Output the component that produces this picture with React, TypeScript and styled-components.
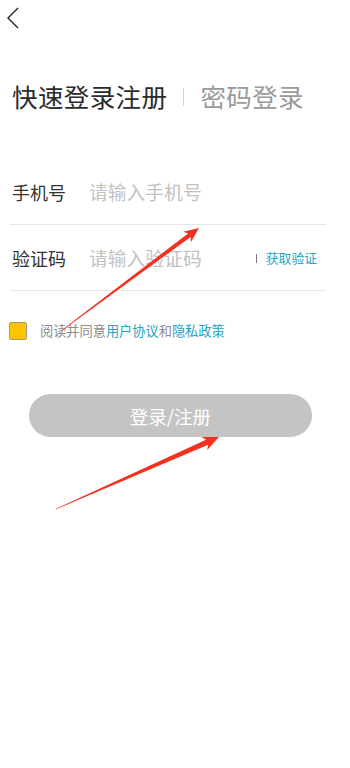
import React from 'react';
import styled, {createGlobalStyle} from 'styled-components';

const GlobalStyle = createGlobalStyle`
  html, body {
    margin: 0;
    padding: 0;
    background: #fff;
  }
  body {
    font-family: "Noto Sans CJK SC", "Noto Sans", sans-serif;
    color: #333;
  }
`;

type Pt = [number, number];

// tapered arrow polygon: thin tail, wider shaft at the head
const arrowPoints = (tail: Pt, tip: Pt, headLen = 16, headHalf = 7, shaftHalf = 2.4) => {
  const dx = tip[0] - tail[0];
  const dy = tip[1] - tail[1];
  const len = Math.hypot(dx, dy);
  const ux = dx / len;
  const uy = dy / len;
  const nx = -uy;
  const ny = ux;
  const bx = tip[0] - ux * headLen;
  const by = tip[1] - uy * headLen;
  const pts: Pt[] = [
    [tail[0] + nx * 0.3, tail[1] + ny * 0.3],
    [bx + ux * 3 + nx * shaftHalf, by + uy * 3 + ny * shaftHalf],
    [bx + nx * headHalf, by + ny * headHalf],
    tip,
    [bx - nx * headHalf, by - ny * headHalf],
    [bx + ux * 3 - nx * shaftHalf, by + uy * 3 - ny * shaftHalf],
    [tail[0] - nx * 0.3, tail[1] - ny * 0.3],
  ];
  return pts.map(p => `${p[0].toFixed(1)},${p[1].toFixed(1)}`).join(' ');
};

export default function App() {
  return (
    <Styled.Page>
      <GlobalStyle />
      <Styled.Header>
        <Styled.Back aria-label="back">
          <svg width="14" height="22" viewBox="0 0 14 22">
            <path d="M12 1 L2 11 L12 21" fill="none" stroke="#222" strokeWidth="1.4" />
          </svg>
        </Styled.Back>
      </Styled.Header>

      <Styled.TitleRow>
        <Styled.Tab>快速登录注册</Styled.Tab>
        <Styled.TabDivider />
        <Styled.Tab $muted>密码登录</Styled.Tab>
      </Styled.TitleRow>

      <Styled.Form>
        <Styled.Field>
          <Styled.Label>手机号</Styled.Label>
          <Styled.Input placeholder="请输入手机号" />
        </Styled.Field>
        <Styled.Field>
          <Styled.Label>验证码</Styled.Label>
          <Styled.Input placeholder="请输入验证码" />
          <Styled.CodeDivider />
          <Styled.CodeButton>获取验证</Styled.CodeButton>
        </Styled.Field>
      </Styled.Form>

      <Styled.Agreement>
        <Styled.Check />
        <Styled.AgreeText>
          阅读并同意<Styled.Link>用户协议</Styled.Link>和<Styled.Link>隐私政策</Styled.Link>
        </Styled.AgreeText>
      </Styled.Agreement>

      <Styled.Submit>登录/注册</Styled.Submit>

      <Styled.Overlay width="350" height="768" viewBox="0 0 350 768">
        <polygon points={arrowPoints([61, 331], [199, 228], 15, 6.5, 2.2)} fill="#f2311f" />
        <polygon points={arrowPoints([56, 509], [219, 437], 16, 7, 2.8)} fill="#f2311f" />
      </Styled.Overlay>
    </Styled.Page>
  );
}

const Styled = {
  Page: styled.div`
    position: relative;
    width: 350px;
    height: 768px;
    overflow: hidden;
  `,
  Header: styled.div`
    height: 40px;
    display: flex;
    align-items: flex-start;
    padding: 7px 0 0 6px;
    box-sizing: border-box;
  `,
  Back: styled.div`
    display: flex;
    width: 20px;
    height: 24px;
  `,
  TitleRow: styled.div`
    display: flex;
    align-items: center;
    height: 40px;
    margin-top: 36px;
    padding-left: 12px;
  `,
  Tab: styled.div<{$muted?: boolean}>`
    font-size: 25.5px;
    line-height: 40px;
    color: ${p => (p.$muted ? '#9a9a9a' : '#2b2b2b')};
    letter-spacing: 0.4px;
  `,
  TabDivider: styled.div`
    width: 1px;
    height: 18px;
    background: #d6d6d6;
    margin: 2px 16px 0 16px;
  `,
  Form: styled.div`
    margin-top: 43px;
    padding: 0 24px 0 10px;
  `,
  Field: styled.div`
    display: flex;
    align-items: center;
    height: 65px;
    border-bottom: 1px solid #e6e6e6;
  `,
  Label: styled.div`
    width: 77px;
    padding-left: 2px;
    font-size: 18px;
    color: #333;
  `,
  Input: styled.input`
    flex: 1;
    min-width: 0;
    border: none;
    outline: none;
    padding: 0;
    background: transparent;
    font-family: inherit;
    font-size: 18.8px;
    color: #333;
    &::placeholder {
      color: #c2c2c2;
    }
  `,
  CodeDivider: styled.div`
    width: 1px;
    height: 9px;
    background: #777;
    margin: 2px 9px 0 0;
  `,
  CodeButton: styled.div`
    font-size: 12.8px;
    color: #27a5c6;
    padding-right: 9px;
  `,
  Agreement: styled.div`
    display: flex;
    align-items: center;
    margin-top: 30px;
    padding-left: 9px;
  `,
  Check: styled.div`
    width: 16px;
    height: 16px;
    background: #fcc500;
    border: 1px solid #a39b80;
    border-radius: 2px;
  `,
  AgreeText: styled.div`
    margin-left: 13px;
    font-size: 13.2px;
    color: #8c8c8c;
  `,
  Link: styled.span`
    color: #25a3c4;
  `,
  Submit: styled.button`
    display: block;
    margin: 54px 0 0 29px;
    width: 283px;
    height: 43px;
    border: none;
    border-radius: 22px;
    background: #c4c4c4;
    color: #fff;
    font-family: inherit;
    font-size: 18.5px;
    padding: 0;
  `,
  Overlay: styled.svg`
    position: absolute;
    left: 0;
    top: 0;
    pointer-events: none;
  `,
};
